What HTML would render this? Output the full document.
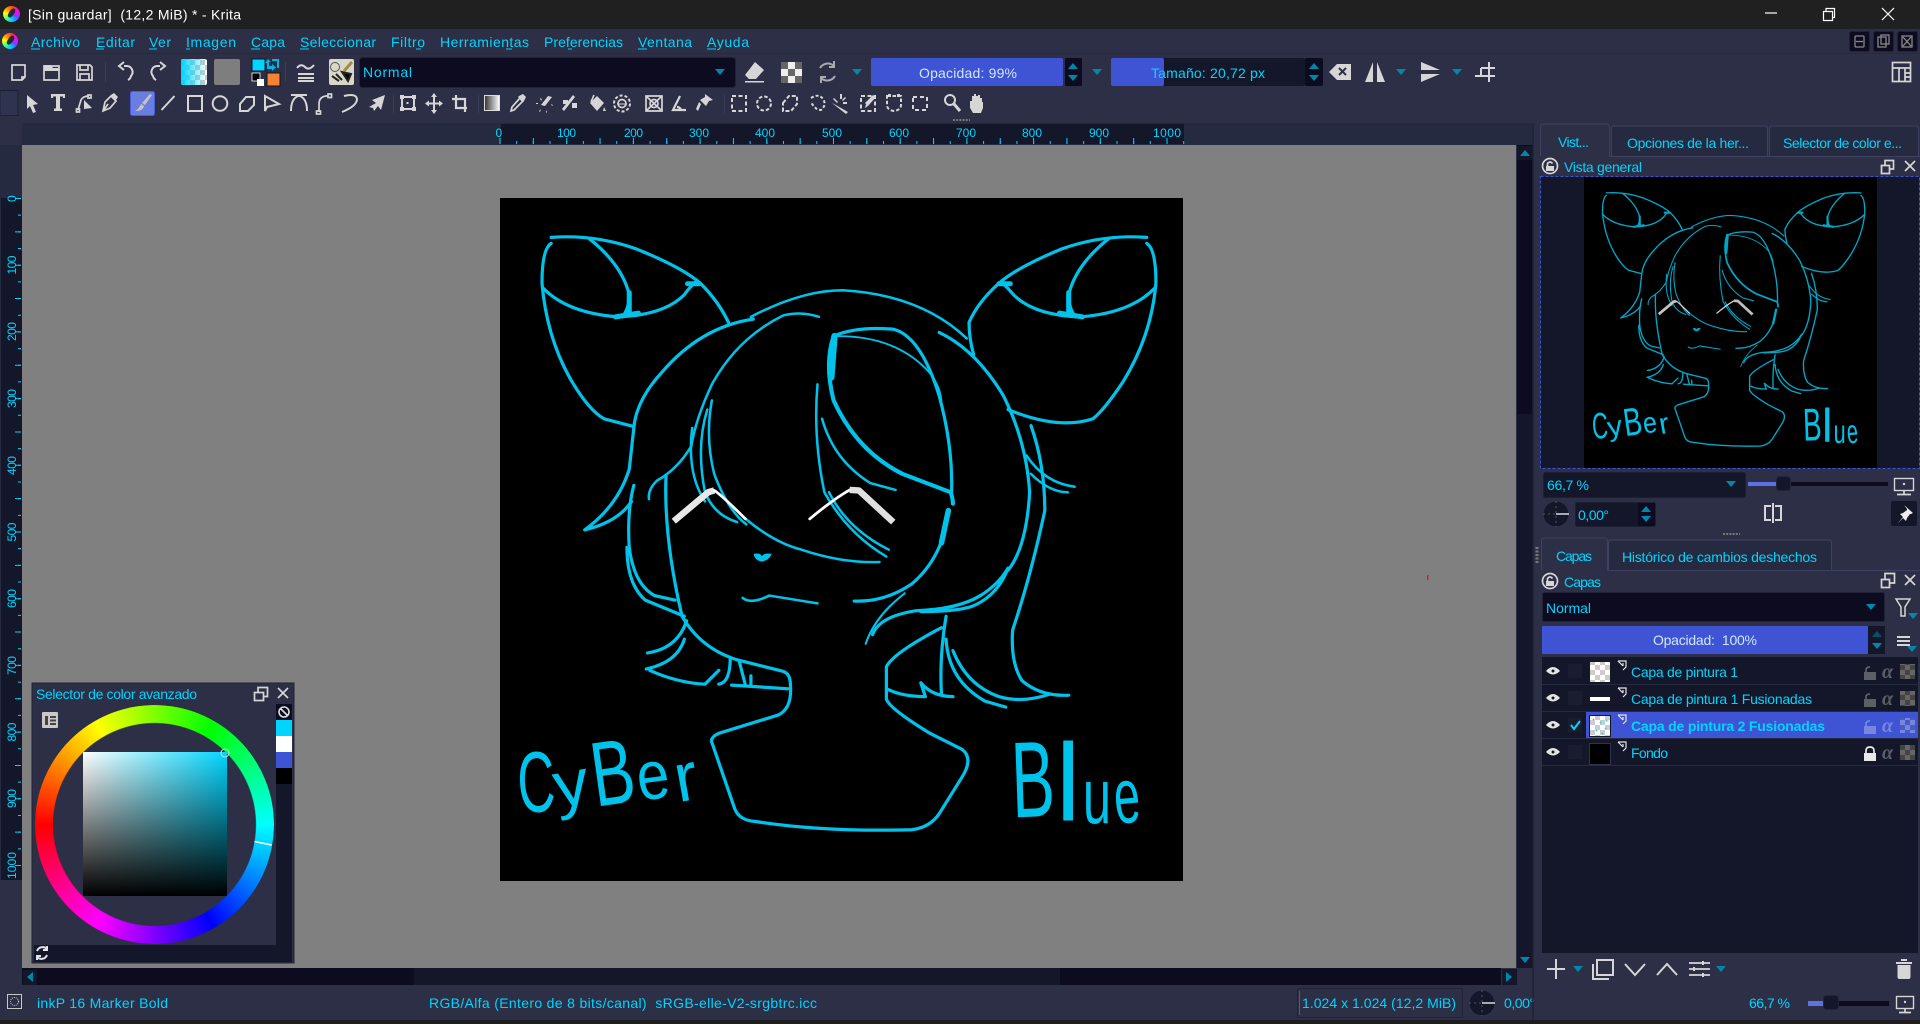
<!DOCTYPE html>
<html lang="es"><head><meta charset="utf-8"><title>Krita</title>
<style>
html,body{margin:0;padding:0;width:1920px;height:1024px;overflow:hidden;background:#2c2f45}
svg{position:absolute;left:0;top:0;overflow:visible}
svg text{font-family:"Liberation Sans",sans-serif;font-size:14px;fill:#00d5ff}
.w{fill:#cfe6fb!important}
.i{fill:none;stroke:#d6d6d6;stroke-width:1.7}
.f{fill:#d6d6d6}
.a{fill:#0088aa}
.r text{font-size:12px}
svg text.al{font-family:"Liberation Serif",serif;font-style:italic;font-weight:bold;font-size:20px;fill:#5c5f66}
.logo{position:absolute;border-radius:50%;background:conic-gradient(from 20deg,#f33,#f0f,#55f,#0cf,#4f8,#ff0,#f80,#f33)}
.logo:after{content:"";position:absolute;left:35%;top:10%;width:30%;height:65%;background:#222a3a;transform:rotate(35deg);border-radius:40%}
#wheel{position:absolute;left:35px;top:705px;width:239px;height:239px;border-radius:50%;background:conic-gradient(from 270deg,#f00,#ff0,#0f0,#0ff,#00f,#f0f,#f00);-webkit-mask:radial-gradient(circle,transparent 101px,#000 102px);mask:radial-gradient(circle,transparent 101px,#000 102px)}
#sq{position:absolute;left:83px;top:752px;width:144px;height:144px;background:linear-gradient(to bottom,transparent,#000),linear-gradient(to right,#fff,#00d5ff)}
</style></head><body>
<svg width="1920" height="1024" viewBox="0 0 1920 1024" xmlns="http://www.w3.org/2000/svg">
<defs>
<path id="dn" class="a" d="M-5,-3h10l-5,6z"/>
<path id="up" class="a" d="M-5,3h10l-5,-6z"/>
<pattern id="chk" width="10" height="10" patternUnits="userSpaceOnUse"><rect width="10" height="10" fill="#fff"/><rect width="5" height="5" fill="#ccc"/><rect x="5" y="5" width="5" height="5" fill="#ccc"/></pattern>
<pattern id="chk2" width="10" height="10" patternUnits="userSpaceOnUse"><rect width="10" height="10" fill="#444"/><rect width="5" height="5" fill="#666"/><rect x="5" y="5" width="5" height="5" fill="#666"/></pattern>
<pattern id="chk3" width="10" height="10" patternUnits="userSpaceOnUse"><rect width="10" height="10" fill="#4a5cc0"/><rect width="5" height="5" fill="#7486e0"/><rect x="5" y="5" width="5" height="5" fill="#7486e0"/></pattern>
<linearGradient id="gs"><stop offset="0" stop-color="#00d5ff"/><stop offset="1" stop-color="#00d5ff" stop-opacity="0"/></linearGradient>
<linearGradient id="gt"><stop offset="0" stop-color="#333"/><stop offset="1" stop-color="#fff"/></linearGradient>
<g id="art" fill="none" stroke="#00c3eb" stroke-linecap="round" stroke-linejoin="round" stroke-width="7">
<path d="M155 125Q250 118 340 150Q440 190 480 225Q520 265 541 310"/>
<path d="M155 138Q135 150 135 225Q145 340 195 430Q235 500 270 520L335 537"/>
<path d="M137 235Q190 290 300 298Q400 295 445 250Q455 235 470 222"/>
<path d="M237 127Q310 185 325 250Q325 280 310 298"/>
<path d="M325 245L325 288M295 298L345 290M452 226L478 226" stroke-width="11"/>
<path d="M1452 125Q1357 118 1267 150Q1170 190 1130 225Q1085 265 1065 310Q1065 345 1075 380"/>
<path d="M1452 138Q1472 150 1472 225Q1462 340 1400 440Q1360 500 1335 520Q1260 545 1150 500"/>
<path d="M1470 235Q1417 290 1307 298Q1207 295 1162 250Q1150 235 1135 222"/>
<path d="M1370 127Q1297 185 1282 250Q1282 280 1297 298"/>
<path d="M1282 245L1282 288M1312 298L1262 290M1155 226L1130 226" stroke-width="11"/>
<path d="M590 298Q700 240 790 240Q960 250 1060 345" stroke-width="5.500"/>
<path d="M1000 332Q1080 370 1140 470Q1190 570 1197 680Q1190 800 1150 850"/>
<path d="M595 303Q480 320 395 420Q340 480 335 540L325 630Q300 710 228 762Q300 745 330 700"/>
<path d="M738 298Q700 285 660 295Q560 345 505 445Q470 520 460 580Q430 630 385 655Q365 675 368 695" stroke-width="5.500"/>
<path d="M505 480Q490 560 510 640Q540 720 580 750M495 500Q470 580 490 680Q510 730 560 745M462 540Q450 640 490 700" stroke-width="5.500"/>
<path d="M405 645Q400 780 440 950Q480 1020 560 1045L660 1070Q676 1075 676 1100Q680 1150 650 1165L520 1205Q500 1215 505 1225L555 1370Q565 1395 600 1397Q750 1420 940 1415Q980 1410 1000 1380L1050 1300Q1075 1260 1050 1240L980 1205Q890 1150 885 1130L885 1060Q900 1030 1005 975"/>
<path d="M335 665Q320 720 325 800Q335 880 380 905L425 915M320 800Q320 880 360 915L445 950"/>
<path d="M450 960Q430 1020 365 1030M445 1000Q430 1050 362 1065M370 1068Q430 1095 490 1098L520 1068M545 1040Q545 1095 520 1098M548 1100L670 1108M565 1050L578 1100M590 1080L590 1100"/>
<path d="M575 735Q640 790 700 805Q790 835 870 832" stroke-width="5.500"/>
<path d="M770 340Q750 400 770 480Q820 590 920 640L1025 680Q1030 695 1030 705" stroke-width="9"/>
<path d="M772 340L765 430" stroke-width="14"/>
<path d="M770 340Q820 318 900 325Q960 340 1000 470Q1030 580 1027 680"/>
<path d="M780 340Q900 340 970 410Q1000 440 1005 480" stroke-width="4"/>
<path d="M735 445Q725 560 750 680Q800 770 885 820M745 520Q770 610 850 660L905 675M760 680Q800 760 890 805" stroke-width="5.500"/>
<path d="M1020 720Q1010 820 940 880Q880 920 815 917" stroke-width="7"/>
<path d="M1020 720L1005 790" stroke-width="12"/>
<path d="M925 900Q860 950 840 1010" stroke-width="4.500"/>
<path d="M855 990Q870 950 950 938Q1040 935 1090 905Q1130 880 1150 845Q1130 900 1080 925Q1050 940 960 940"/>
<path d="M1200 535Q1230 620 1230 720Q1200 860 1160 980Q1155 1050 1180 1090Q1220 1125 1282 1122"/>
<path d="M1190 600Q1230 660 1295 668M1200 640Q1240 680 1280 680" stroke-width="5.500"/>
<path d="M1015 950Q1000 1040 1005 1120M1015 1000Q1020 1090 1100 1135L1145 1148M1030 1025Q1060 1100 1130 1125Q1180 1140 1240 1120M890 1110Q920 1125 970 1125L960 1095Q985 1125 1030 1125"/>
<path d="M572 910Q590 925 630 905L735 922" stroke-width="5.500"/>
<path d="M597 815Q612 812 613 822Q618 812 634 815Q628 828 614 830Q600 828 597 815z" fill="#00c3eb" stroke-width="2"/>
<path d="M422 743L497 680L510 676" stroke="#e8e8e8" stroke-width="14" stroke-linecap="butt"/>
<path d="M510 676Q525 685 578 738" stroke="#fff" stroke-width="6"/>
<path d="M718 738Q770 695 805 675" stroke="#fff" stroke-width="6"/>
<path d="M805 675L825 676L900 745" stroke="#e0e0e0" stroke-width="14" stroke-linecap="butt"/>
</g>
</defs>

<!-- title bar -->
<rect width="1920" height="29" fill="#202020"/>
<text x="28" y="19.5" textLength="213" style="fill:#fff">[Sin guardar]&#160; (12,2 MiB) * - Krita</text>
<path d="M1765 13h12" stroke="#fff" stroke-width="1.2"/>
<path d="M1823.5 11.5h9v9h-9zM1826 11v-2.500h8.500v9h-2" fill="none" stroke="#fff" stroke-width="1.200"/>
<path d="M1882 8l12 12M1894 8l-12 12" stroke="#fff" stroke-width="1.200"/>

<!-- menu -->
<g>
<text x="31" y="47" textLength="49">Archivo</text><text x="96" y="47" textLength="39">Editar</text><text x="149" y="47" textLength="22">Ver</text><text x="186" y="47" textLength="50">Imagen</text><text x="251" y="47" textLength="34">Capa</text><text x="300" y="47" textLength="76">Seleccionar</text><text x="391" y="47" textLength="34">Filtro</text><text x="440" y="47" textLength="89">Herramientas</text><text x="544" y="47" textLength="79">Preferencias</text><text x="638" y="47" textLength="54">Ventana</text><text x="707" y="47" textLength="42">Ayuda</text>
<path d="M31 49h9M96 49h8M149 49h8M186 49h4M251 49h9M300 49h9M416 49h5M506 49h6M568 49h4M638 49h9M707 49h9" stroke="#00d5ff"/>
</g>
<path d="M0 53.500H1920" stroke="#262940"/>
<g fill="#0c0b20" stroke="#1f2235"><rect x="1849.500" y="31.500" width="20" height="20" rx="2"/><rect x="1873.500" y="31.500" width="20" height="20" rx="2"/><rect x="1897.500" y="31.500" width="20" height="20" rx="2"/></g>
<g fill="none" stroke="#888" stroke-width="1.300"><rect x="1855" y="36" width="9" height="11" rx="1"/><path d="M1856 41.500h7"/><rect x="1878" y="37" width="8" height="10"/><rect x="1881" y="35" width="8" height="9"/><rect x="1902" y="36" width="10" height="11"/><path d="M1903 37l8 9M1911 37l-8 9"/></g>

<!-- toolbar 1 -->
<path class="i" d="M12 65h13v12l-3 3h-10zM25 77h-3v3"/>
<path class="i" d="M44 66h15v14h-15z"/><path class="f" d="M44 65h7l2 3h6v3h-15z"/>
<path class="i" d="M77 65h13l2 2v13h-15z"/><path class="i" d="M80 65v5h8v-5M80 80v-6h9v6"/>
<path d="M105.500 62v20" stroke="#3a3d55"/>
<path class="i" style="stroke-width:2" d="M124 66h3a6 6 0 0 1 4 10a6 6 0 0 1-3 4M124 62l-5 4 5 4"/>
<path class="i" style="stroke-width:2" d="M160 66h-3a6 6 0 0 0-4 10a6 6 0 0 0 3 4M160 62l5 4-5 4"/>
<rect x="181" y="59" width="26" height="26" rx="2" fill="url(#chk)"/><rect x="181" y="59" width="26" height="26" rx="2" fill="url(#gs)"/>
<rect x="214" y="59" width="26" height="26" rx="2" fill="#7e7e7e"/>
<rect x="252" y="59" width="13" height="12" fill="#00d5ff" stroke="#14172a"/>
<rect x="267" y="73" width="13" height="13" fill="#f58233" stroke="#14172a"/>
<path d="M268 59l3 3h-2v4h3v-2l4 3.500-4 3.500v-2h-5v-6h-2zM273 62" fill="#00b5e0"/>
<path d="M272 60h6v8" stroke="#00b5e0" stroke-width="2" fill="none"/>
<rect x="252" y="73" width="8" height="8" fill="#000" stroke="#fff" stroke-width=".8"/><rect x="257" y="79" width="7" height="7" fill="#fff"/>
<path d="M285.500 62v20" stroke="#3a3d55"/>
<path class="i" style="stroke-width:2" d="M297 68q4-5 8-1t9-2M298 74h16M298 78h16M298 81h16"/>
<rect x="329" y="59" width="25" height="26" rx="2" fill="#d8d8c8"/>
<circle cx="335" cy="67" r="4.500" fill="none" stroke="#556"/><path d="M352 62l-8 9" stroke="#a58b46" stroke-width="3"/><path d="M332 76l7 5M336 74l6 6M342 72l6 9l3-7z" stroke="#222" stroke-width="2"/>
<rect x="359.500" y="57.500" width="376" height="30" rx="3" fill="#0c0b20" stroke="#1f2235"/>
<text x="363" y="77" textLength="49">Normal</text>
<use href="#dn" x="720" y="72"/>
<path class="f" d="M755 62l9 8-8 9h-7l-4-4zM745 81h19v1.500h-19z"/>
<g><rect x="781" y="62" width="21" height="21" fill="#eee"/><path fill="#666" d="M781 62h7v7h-7zM795 62h7v7h-7zM788 69h7v7h-7zM781 76h7v7h-7zM795 76h7v7h-7z"/></g>
<path fill="none" stroke="#aaa" stroke-width="2" d="M820 68a9 9 0 0 1 14-2M835 76a9 9 0 0 1-14 2M834 61v6h-5M821 83v-6h5"/>
<use href="#dn" x="857" y="72"/>
<rect x="871" y="58" width="192" height="28" rx="2" fill="#3f54d4"/>
<text class="w" x="919" y="78" textLength="98">Opacidad: 99%</text>
<rect x="1065" y="58" width="17" height="28" rx="2" fill="#0c0b20"/><use href="#up" x="1073" y="66"/><use href="#dn" x="1073" y="78"/>
<use href="#dn" x="1097" y="72"/>
<rect x="1111" y="58" width="194" height="28" rx="2" fill="#14172a"/><rect x="1111" y="58" width="53" height="28" rx="2" fill="#3f54d4"/>
<text x="1151" y="78" textLength="114">Tamaño: 20,72 px</text>
<rect x="1305" y="58" width="18" height="28" rx="2" fill="#0c0b20"/><use href="#up" x="1314" y="66"/><use href="#dn" x="1314" y="78"/>
<path class="f" d="M1337 64h14v16h-14l-8-8z"/><path d="M1339 68l7 7M1346 68l-7 7" stroke="#2c2f45" stroke-width="2"/>
<path class="f" d="M1373 62v20h-8zM1377 62v20h8z"/>
<use href="#dn" x="1401" y="72"/>
<path class="f" d="M1421 62l19 8h-19zM1421 82l19-8h-19z"/>
<use href="#dn" x="1457" y="72"/>
<path class="i" style="stroke-width:2" d="M1475 76h20M1489 62v20M1481 68h14M1481 68v8"/>
<g class="i"><rect x="1892.500" y="62.500" width="18" height="19"/><path d="M1892 68h19M1899 68v14M1905 68v14M1905 73h6M1905 77h6"/></g>

<!-- toolbar 2 -->
<rect x="0" y="90.500" width="18" height="25" fill="#2f3350" stroke="#1d2034"/>
<path class="f" d="M27 95l11 9-5 1 3 7-3 1-3-7-3 3z"/>
<path class="f" d="M51 94h14v4h-2v-1.500h-3v12h2v2.500h-8v-2.500h2v-12h-3v1.500h-2z"/>
<path class="i" d="M78 110l3-10q2-4 8-4"/><rect class="i" x="76.500" y="109" width="3" height="3"/><rect class="i" x="88" y="95" width="3" height="3"/><path class="f" d="M84 100l8 8-8 1z"/>
<path class="i" d="M103 111l2-9 6-6 5 5-6 7zM103 111l5-7"/><path class="f" d="M111 95l3-2 4 4-2 3z"/>
<rect x="130.500" y="91.500" width="24" height="24" rx="2" fill="#6a7de0" stroke="#4b5ed8"/>
<path fill="#c4c4c4" d="M150 94l2 1-7 10-3-2zM141 104l3 2q-1 5-9 5q4-2 6-7z"/>
<path class="i" style="stroke-width:2" d="M161.500 110l13-14"/>
<rect class="i" x="188" y="96" width="14" height="15" style="stroke-width:2"/>
<circle class="i" cx="220" cy="103.500" r="7.300" style="stroke-width:2"/>
<path class="i" style="stroke-width:2" d="M240 104l6-7h8v8l-6 6h-8z"/>
<path class="i" style="stroke-width:2" d="M265 96l14 8-12 3 -2 4z"/>
<path class="i" style="stroke-width:2" d="M291 111q0-12 7-15h2q7 3 7 15M291 95h16"/>
<path class="i" d="M319 112v-8q0-7 7-8h2"/><rect class="i" x="316.500" y="111" width="4" height="3"/><rect class="i" x="328" y="94" width="3.500" height="3.500"/>
<path class="i" style="stroke-width:2" d="M344 96q12-3 13 3q0 7-15 13"/>
<path class="f" d="M385 95l-13 5 4 3-7 4 4 1 1 3 4-5 3 4z"/>
<path d="M393.500 95v18" stroke="#3a3d55"/>
<rect class="i" x="402" y="97" width="12" height="12" style="stroke-width:2"/><path class="f" d="M400 95h4v4h-4zM412 95h4v4h-4zM400 107h4v4h-4zM412 107h4v4h-4zM406.500 102h2v2h-2z"/>
<path class="i" style="stroke-width:2" d="M434 95v17M426 103.500h16"/><path class="f" d="M434 93l3 4h-6zM434 114l3-4h-6zM425 103.500l4-3v6zM443 103.500l-4-3v6z"/>
<path class="i" style="stroke-width:2.200" d="M456 95v13h11M452 99h13v13"/>
<path d="M478.500 95v18" stroke="#3a3d55"/>
<rect x="484.500" y="95.500" width="15" height="15" fill="url(#gt)" stroke="#ddd"/>
<path class="i" d="M511 111l1-4 8-9 3 3-9 9z"/><path class="f" d="M519 96l4-2 3 3-2 4-2 1-4-5z"/>
<path class="f" d="M540 98l2 1-1 2zM548 96l4 1-7 9-4-1zM538 103h-2v1h2zM551 104l2 1-1 1zM546 110l1 2-1 1zM541 109l-2 2 1 1z"/>
<path class="f" d="M563 100h5v4h-5zM572 103h5v5h-5zM573 95l2 2-11 14-2-2z"/>
<path class="f" d="M590 103l7-7 7 7-7 8z"/><path d="M594 95l-3 7" stroke="#d6d6d6" stroke-width="1.600"/><path class="f" d="M604 107l2 4h-3z"/>
<circle cx="622" cy="103.500" r="8" fill="none" stroke="#d6d6d6" stroke-width="2" stroke-dasharray="3 2"/><circle class="i" cx="622" cy="103.500" r="4"/><path d="M617 104h10" stroke="#d6d6d6"/>
<path class="i" d="M646 96h16v15h-16zM647 97l14 13M661 97l-14 13"/><circle class="i" cx="654" cy="103.500" r="4"/>
<path class="i" style="stroke-width:2.200" d="M680 96l-7 14h13M677 107q3 0 4 3"/>
<path class="f" d="M705 94l8 6-4 1-3 5-6-6 5-3zM699 102l2 2-3 7-2-2z"/>
<path d="M724.500 95v18" stroke="#3a3d55"/>
<g fill="none" stroke="#d6d6d6" stroke-width="2">
<rect x="732" y="96" width="14" height="15" stroke-dasharray="4 2.500"/>
<circle cx="764" cy="103.500" r="7" stroke-dasharray="3.500 2"/>
<path d="M783 103l6-7h8v8l-6 7h-8z" stroke-dasharray="4 2"/>
<path d="M811 98q8-5 12 1t-2 11q-6 0-10-8" stroke-dasharray="3 2"/>
<rect x="861" y="96" width="14" height="15" stroke-dasharray="4 2.500"/>
<path d="M887 96h14v9q0 5-7 6q-7-1-7-6z" stroke-dasharray="3.500 2"/>
<path d="M913 97h14v13h-14z" stroke-dasharray="4 3"/>
</g>
<path class="f" d="M834 98l4 4-1 1-4-4zM840 94h2v5h-2zM845 97l1 1-3 3-1-1zM834 104l14 8-2 2-14-11 2 1zM847 102v2h-4v-2z"/>
<path class="f" d="M873 95l3 2-8 9-3-3z"/><path class="f" d="M866 104l2 2-3 2z"/>
<path class="f" d="M888 94h3v3h-3zM897 94h3v3h-3z"/>
<circle class="i" cx="950" cy="100" r="5" style="stroke-width:2"/><path d="M954 104l6 7" stroke="#d6d6d6" stroke-width="3"/>
<path class="f" d="M973 113l-3-5v-7h2v-5h2v-2h2v2h2v-1h2v3h2v4h1v6l-2 5z"/>
<path d="M953 120h17" stroke="#777" stroke-width="2" stroke-dasharray="2 1.200"/>

<!-- rulers -->
<rect x="22" y="123" width="1510" height="22" fill="#262a40"/>
<rect x="0" y="145" width="22" height="735" fill="#262a40"/>
<rect x="501" y="124" width="683" height="20" fill="#14172a"/>
<rect x="1" y="198" width="21" height="682" fill="#14172a"/>
<g class="r">
<text x="495.500" y="137" textLength="7">0</text><text x="557" y="137" textLength="19">100</text><text x="624" y="137" textLength="19">200</text><text x="689" y="137" textLength="20">300</text><text x="755" y="137" textLength="20">400</text><text x="822" y="137" textLength="20">500</text><text x="889" y="137" textLength="20">600</text><text x="956" y="137" textLength="20">700</text><text x="1022" y="137" textLength="20">800</text><text x="1089" y="137" textLength="20">900</text><text x="1153" y="137" textLength="28">1000</text>
<g transform="translate(16,202) rotate(-90)"><text textLength="7">0</text></g>
<g transform="translate(16,274.500) rotate(-90)"><text textLength="19">100</text></g>
<g transform="translate(16,341) rotate(-90)"><text textLength="19">200</text></g>
<g transform="translate(16,408) rotate(-90)"><text textLength="19">300</text></g>
<g transform="translate(16,475) rotate(-90)"><text textLength="19">400</text></g>
<g transform="translate(16,541.500) rotate(-90)"><text textLength="19">500</text></g>
<g transform="translate(16,608) rotate(-90)"><text textLength="19">600</text></g>
<g transform="translate(16,675) rotate(-90)"><text textLength="19">700</text></g>
<g transform="translate(16,741.500) rotate(-90)"><text textLength="19">800</text></g>
<g transform="translate(16,808) rotate(-90)"><text textLength="19">900</text></g>
<g transform="translate(16,879) rotate(-90)"><text textLength="27">1000</text></g>
</g>
<path d="M499.500 142.500H1185" stroke="#00d5ff" stroke-width="3" stroke-dasharray="1 15.675"/>
<path d="M499.500 141H1185" stroke="#00d5ff" stroke-width="6" stroke-dasharray="1 32.350"/>
<path d="M19.500 198V880" stroke="#00d5ff" stroke-width="3" stroke-dasharray="1 15.675"/>
<path d="M18 198V880" stroke="#00d5ff" stroke-width="6" stroke-dasharray="1 32.350"/>

<!-- canvas -->
<rect x="22" y="145" width="1494" height="823" fill="#808080"/>
<rect x="500" y="198" width="683" height="683" fill="#000"/>
<svg x="480" y="180" width="720" height="720" viewBox="0 0 1568 1568">
<use href="#art"/>
<g transform="translate(85,1378) rotate(-3) scale(.6,1)"><text style="font-size:188px;fill:#00c3eb">C</text></g>
<g transform="translate(168,1368) rotate(-10) scale(1.100,1)"><text style="font-size:140px;fill:#00c3eb">y</text></g>
<g transform="translate(252,1365) rotate(-8) scale(.7,1)"><text style="font-size:200px;fill:#00c3eb">B</text></g>
<g transform="translate(348,1352) rotate(-8) scale(.85,1)"><text style="font-size:150px;fill:#00c3eb">e</text></g>
<g transform="translate(432,1355) rotate(-10)"><text style="font-size:150px;fill:#00c3eb">r</text></g>
<g transform="translate(1160,1388) rotate(-2) scale(.6,1)"><text style="font-size:235px;fill:#00c3eb">B</text></g>
<g transform="translate(1254,1395)"><text style="font-size:240px;fill:#00c3eb">l</text></g>
<g transform="translate(1313,1400) scale(.65,1)"><text style="font-size:170px;fill:#00c3eb">u</text></g>
<g transform="translate(1385,1402) rotate(-5) scale(.6,1)"><text style="font-size:170px;fill:#00c3eb">e</text></g>
</svg>
<rect x="1427" y="575" width="1.500" height="5" fill="#a33"/>

<!-- scrollbars -->
<rect x="1517" y="145" width="16" height="822" fill="#0c0b20"/>
<rect x="1517" y="146" width="16" height="14" fill="#14172a"/><use href="#up" x="1525" y="153"/>
<rect x="1517" y="414" width="16" height="538" fill="#14172a"/>
<rect x="1517" y="952" width="16" height="16" fill="#14172a"/><use href="#dn" x="1525" y="960"/>
<rect x="22" y="968" width="1479" height="17" fill="#0c0b20"/>
<rect x="23" y="970" width="14" height="15" fill="#14172a"/><path class="a" d="M33 972v10l-6-5z"/>
<rect x="414" y="968" width="646" height="17" fill="#14172a"/>
<rect x="1502" y="969" width="15" height="16" fill="#14172a"/><path class="a" d="M1506 972v10l6-5z"/>

<!-- status bar -->
<rect y="1020" width="1920" height="4" fill="#1e1e1e"/>
<rect class="i" x="7.500" y="994.500" width="14" height="14" style="stroke:#c8c8c8;stroke-width:1"/><circle cx="14.500" cy="1001.500" r="4" fill="none" stroke="#ccc" stroke-dasharray="1 1"/>
<text x="37" y="1008" textLength="131">inkP 16 Marker Bold</text>
<text x="429" y="1008" textLength="388">RGB/Alfa (Entero de 8 bits/canal)&#160; sRGB-elle-V2-srgbtrc.icc</text>
<rect x="1297.500" y="988.500" width="165" height="29" fill="none" stroke="#222539"/><path d="M1299.500 991v24" stroke="#3f54d4"/>
<text x="1302" y="1008" textLength="154">1.024 x 1.024 (12,2 MiB)</text>
<circle cx="1482" cy="1003" r="13" fill="#14172a" stroke="#2f3350"/><path d="M1482 1003h13" stroke="#ddd" stroke-width="1.500"/><path d="M1482 990v26M1469 1003h13" stroke="#555" stroke-dasharray="2 3"/>
<text x="1504" y="1008" textLength="31">0,00°</text>
<text x="1749" y="1008" textLength="41">66,7 %</text>
<rect x="1808" y="1001" width="81" height="5" fill="#0c0b20"/><rect x="1808" y="1001" width="16" height="5" fill="#5d70e4"/>
<rect x="1823.500" y="995.500" width="15" height="14" rx="3" fill="#14172a" stroke="#222539"/>
<rect class="i" x="1896.500" y="996.500" width="17" height="12" style="stroke-width:1.400"/><circle class="f" cx="1905" cy="1002" r="1.200"/><path class="i" d="M1905 1009v3M1899 1012.500h12"/>

<!-- right dock tabs -->
<path d="M1533 124V1020" stroke="#1e2133" stroke-width="1.500"/>
<path d="M1540.500 156v-29q0-3 3-3h63q3 0 3 3v29" fill="#2c2f45" stroke="#3e4160"/>
<path d="M1611.500 156v-27q0-3 3-3h150q3 0 3 3v27" fill="#262a40" stroke="#3e4160"/>
<path d="M1769.500 156v-27q0-3 3-3h143q3 0 3 3v27" fill="#262a40" stroke="#3e4160"/>
<path d="M1609 156.500H1920" stroke="#3e4160"/>
<text x="1558" y="147" textLength="31">Vist...</text>
<text x="1627" y="148" textLength="122">Opciones de la her...</text>
<text x="1783" y="148" textLength="119">Selector de color e...</text>
<circle class="i" cx="1550" cy="166" r="7.500"/><path class="f" d="M1546 166h8v5h-8z"/><path class="i" d="M1547.500 166v-2.500q2.500-3 5 0"/>
<text x="1564" y="172" textLength="78">Vista general</text>
<g class="i"><rect x="1881.500" y="165.500" width="8" height="8"/><path d="M1885 165.500v-5h8.500v8.500h-4"/></g>
<path class="i" d="M1905 161l10 10M1915 161l-10 10"/>

<!-- overview -->
<rect x="1540.500" y="176.500" width="379" height="292" fill="#14172a" stroke="#3f54d4" stroke-dasharray="3 2"/>
<rect x="1584" y="177" width="293" height="291" fill="#000"/>
<svg x="1584" y="176" width="293" height="292" viewBox="44 39 1487 1488">
<use href="#art" opacity=".85"/>
<g transform="translate(85,1378) rotate(-3) scale(.6,1)"><text style="font-size:188px;fill:#00c3eb">C</text></g>
<g transform="translate(168,1368) rotate(-10) scale(1.100,1)"><text style="font-size:140px;fill:#00c3eb">y</text></g>
<g transform="translate(252,1365) rotate(-8) scale(.7,1)"><text style="font-size:200px;fill:#00c3eb">B</text></g>
<g transform="translate(348,1352) rotate(-8) scale(.85,1)"><text style="font-size:150px;fill:#00c3eb">e</text></g>
<g transform="translate(432,1355) rotate(-10)"><text style="font-size:150px;fill:#00c3eb">r</text></g>
<g transform="translate(1160,1388) rotate(-2) scale(.6,1)"><text style="font-size:235px;fill:#00c3eb">B</text></g>
<g transform="translate(1254,1395)"><text style="font-size:240px;fill:#00c3eb">l</text></g>
<g transform="translate(1313,1400) scale(.65,1)"><text style="font-size:170px;fill:#00c3eb">u</text></g>
<g transform="translate(1385,1402) rotate(-5) scale(.6,1)"><text style="font-size:170px;fill:#00c3eb">e</text></g>
</svg>

<!-- overview controls -->
<rect x="1543.500" y="472.500" width="202" height="25" rx="2" fill="#14172a" stroke="#1d2034"/>
<text x="1547" y="490" textLength="42">66,7 %</text><use href="#dn" x="1731" y="484"/>
<rect x="1748" y="482" width="140" height="4" fill="#0c0b20"/><rect x="1748" y="482" width="28" height="4" fill="#5d70e4"/>
<rect x="1776.500" y="476.500" width="14" height="14" rx="3" fill="#14172a" stroke="#222539"/>
<rect class="i" x="1894.500" y="478.500" width="19" height="12" style="stroke-width:1.400"/><circle class="f" cx="1904" cy="484" r="1.200"/><path class="i" d="M1904 491v3M1897 494.500h14"/>
<circle cx="1556" cy="514" r="13" fill="#14172a" stroke="#2f3350"/><path d="M1556 514h13" stroke="#ddd" stroke-width="1.500"/><path d="M1556 501v26M1543 514h13" stroke="#555" stroke-dasharray="2 3"/>
<rect x="1575.500" y="502.500" width="80" height="24" rx="2" fill="#14172a" stroke="#1d2034"/>
<text x="1578" y="520" textLength="31">0,00°</text>
<rect x="1638" y="503" width="17" height="23" fill="#0c0b20"/><use href="#up" x="1646" y="509"/><use href="#dn" x="1646" y="519"/>
<path class="i" d="M1771 506h-6v14h6M1775 506h6v14h-6M1773 503v20" style="stroke-width:2"/>
<rect x="1891" y="501" width="26" height="25" rx="2" fill="#14172a"/>
<path fill="#eee" d="M1904 505l9 8-2 1-1 0-3 4-1 3-3-3-5 5 5-6-3-3 3-1 4-3v-1z"/>
<path d="M1723 534h17" stroke="#777" stroke-width="2" stroke-dasharray="2 1.200"/>
<path d="M1537 547v16" stroke="#777" stroke-width="3" stroke-dasharray="2 1.500"/>

<!-- layers dock -->
<path d="M1541.500 570v-29q0-3 3-3h60q3 0 3 3v29" fill="#2c2f45" stroke="#3e4160"/>
<path d="M1608.500 570v-27q0-3 3-3h217q3 0 3 3v27" fill="#262a40" stroke="#3e4160"/>
<path d="M1607 570.500H1920" stroke="#3e4160"/>
<text x="1556" y="561" textLength="36">Capas</text>
<text x="1622" y="562" textLength="195">Histórico de cambios deshechos</text>
<circle class="i" cx="1550" cy="581" r="7.500"/><path class="f" d="M1546 581h8v5h-8z"/><path class="i" d="M1547.500 581v-2.500q2.500-3 5 0"/>
<text x="1564" y="587" textLength="37">Capas</text>
<g class="i"><rect x="1881.500" y="579.500" width="8" height="8"/><path d="M1885 579.500v-6h9.500v9.500h-5"/></g>
<path class="i" d="M1905 575l10 10M1915 575l-10 10"/>
<rect x="1542.500" y="592.500" width="342" height="29" rx="2" fill="#0c0b20" stroke="#1f2235"/>
<text x="1546" y="613" textLength="45">Normal</text><use href="#dn" x="1871" y="607"/>
<path class="i" style="stroke-width:1.500" d="M1896 599h14l-5 8v9h-4v-9z"/><use href="#dn" x="1913" y="616"/>
<rect x="1542" y="626" width="326" height="28" fill="#3f54d4"/>
<text class="w" x="1653" y="645" textLength="104">Opacidad:&#160; 100%</text>
<rect x="1868" y="626" width="17" height="28" fill="#14172a"/><use href="#up" x="1877" y="634" opacity=".5"/><use href="#dn" x="1877" y="646"/>
<path d="M1897 637h13M1897 641h13M1897 645h13" stroke="#d6d6d6" stroke-width="2"/><use href="#dn" x="1912" y="649"/>

<rect x="1542" y="657" width="376" height="296" fill="#14172a"/>
<path d="M1542 684.500H1918M1542 711.500H1918M1542 738.500H1918M1542 765.500H1918" stroke="#262a40"/>
<rect x="1586" y="712" width="332" height="26" fill="#3f54d4"/>

<g id="rows">
<g fill="#1a1d30"><rect x="1568" y="664" width="14" height="14"/><rect x="1568" y="691" width="14" height="14"/><rect x="1568" y="718" width="14" height="14"/><rect x="1568" y="745" width="14" height="14"/></g>
<path d="M1571 725l3 4 6-8" stroke="#00d5ff" stroke-width="2" fill="none"/>
<g fill="#e4e4e4"><path d="M1546 671q7-8 14 0q-7 7-14 0z"/><path d="M1546 698q7-8 14 0q-7 7-14 0z"/><path d="M1546 725q7-8 14 0q-7 7-14 0z"/><path d="M1546 752q7-8 14 0q-7 7-14 0z"/></g>
<g fill="#14172a"><circle cx="1553" cy="671" r="1.500"/><circle cx="1553" cy="698" r="1.500"/><circle cx="1553" cy="725" r="1.500"/><circle cx="1553" cy="752" r="1.500"/></g>
<rect x="1590" y="662" width="20" height="20" fill="url(#chk)"/>
<rect x="1590" y="689" width="20" height="20" fill="#14172a"/><rect x="1590" y="697" width="20" height="4" fill="#fff"/>
<rect x="1589.500" y="715.500" width="21" height="21" fill="url(#chk)" stroke="#14172a"/><path d="M1593 719l1 1M1600 722l1 1M1605 728l1 1M1596 730l1 1M1602 733l1 1M1606 720l1 1" stroke="#00d5ff" stroke-width="1.500"/>
<rect x="1589.500" y="743.500" width="21" height="21" fill="#000" stroke="#2f3350"/>
<g fill="none" stroke="#e4e4e4" stroke-width="1.200"><path d="M1618 661h8v6l-3 3M1618 661l5 5M1623 666v-3"/><path d="M1618 688h8v6l-3 3M1618 688l5 5M1623 693v-3"/><path d="M1618 715h8v6l-3 3M1618 715l5 5M1623 720v-3"/><path d="M1618 742h8v6l-3 3M1618 742l5 5M1623 747v-3"/></g>
<text x="1631" y="677" textLength="107">Capa de pintura 1</text>
<text x="1631" y="704" textLength="181">Capa de pintura 1 Fusionadas</text>
<text x="1631" y="731" textLength="194" style="font-weight:bold">Capa de pintura 2 Fusionadas</text>
<text x="1631" y="758" textLength="37">Fondo</text>
<g fill="#5c5f66"><path d="M1864 672h12v8h-12z"/><path d="M1864 699h12v8h-12z"/></g>
<path d="M1866 672v-2q0-3 4-3M1866 699v-2q0-3 4-3" stroke="#5c5f66" stroke-width="1.700" fill="none"/>
<path d="M1864 726h12v8h-12z" fill="#7886e0"/><path d="M1866 726v-2q0-3 4-3" stroke="#7886e0" stroke-width="1.700" fill="none"/>
<path d="M1864 753h12v8h-12z" fill="#e8e8e8"/><path d="M1866 753v-2q0-4 4-4q4 0 4 4v2" stroke="#e8e8e8" stroke-width="1.700" fill="none"/>
<text class="al" x="1882" y="678">α</text><text class="al" x="1882" y="705">α</text><text class="al" x="1882" y="732" style="fill:#7886e0">α</text><text class="al" x="1882" y="759">α</text>
<rect x="1900" y="664" width="15" height="15" fill="url(#chk2)"/><rect x="1900" y="691" width="15" height="15" fill="url(#chk2)"/><rect x="1900" y="718" width="15" height="15" fill="url(#chk3)"/><rect x="1900" y="745" width="15" height="15" fill="url(#chk2)"/>
</g>

<!-- layer buttons -->
<path class="i" style="stroke-width:2" d="M1556 959v20M1547 969h18"/><use href="#dn" x="1578" y="969"/>
<path class="i" style="stroke-width:2" d="M1597 960h16v15h-16zM1593 964v15h16"/>
<path class="i" style="stroke-width:2" d="M1625 964l10 11 10-11M1657 975l10-11 10 11"/>
<path class="i" style="stroke-width:1.800" d="M1689 963h21M1689 969h21M1689 975h21"/><path class="f" d="M1702 961h2v4h-2zM1693 967h2v4h-2zM1702 973h2v4h-2z"/>
<use href="#dn" x="1721" y="969"/>
<path class="f" d="M1896 962h16v2h-16zM1901 959h6v2h-6zM1897.500 965h13v12q0 2-2 2h-9q-2 0-2-2z"/>

<!-- floating color selector -->
<rect x="32" y="683" width="262" height="280" fill="#2c2f45" stroke="#1f2235"/>
<rect x="276" y="704" width="16" height="258" fill="#14172a"/>
<rect x="34" y="945" width="258" height="17" fill="#14172a"/>
<rect x="276" y="704" width="16" height="16" fill="#0c0b20"/>
<circle cx="284" cy="712" r="5" fill="none" stroke="#ddd" stroke-width="1.600"/><path d="M280.500 708.500l7 7" stroke="#ddd" stroke-width="1.600"/>
<rect x="276" y="720" width="16" height="16" fill="#00d5ff"/><rect x="276" y="736" width="16" height="16" fill="#fff"/><rect x="276" y="752" width="16" height="16" fill="#3f54d4"/><rect x="276" y="768" width="16" height="16" fill="#000"/>
<text x="36" y="699" textLength="161">Selector de color avanzado</text>
<g class="i"><rect x="254.500" y="692.500" width="9" height="8"/><path d="M258 692.500v-5h9.500v9h-4"/></g>
<path class="i" d="M278 688l10 10M288 688l-10 10"/>
<rect x="42" y="712" width="16" height="16" rx="1" fill="#c8c8c8"/><path d="M45 716h3v9h-3zM50 716h6v2h-6zM50 719.500h6v2h-6zM50 723h6v2h-6z" fill="#444"/>
<path fill="none" stroke="#e4e4e4" stroke-width="2" d="M37 951a6 6 0 0 1 10-2M47 955a6 6 0 0 1-10 2M47 946v4h-4M37 960v-4h4"/>
</svg>

<div class="logo" style="left:3px;top:6px;width:17px;height:16px"></div>
<div class="logo" style="left:2px;top:33px;width:16px;height:16px"></div>
<div id="wheel"></div>
<div id="sq"></div>
<svg width="1920" height="1024" viewBox="0 0 1920 1024" style="pointer-events:none">
<path d="M254.500 841.500l17 3.500" stroke="#fff" stroke-width="1.500"/>
<circle cx="225" cy="753" r="4" fill="none" stroke="#ddd" stroke-width="1"/>
</svg>
</body></html>
